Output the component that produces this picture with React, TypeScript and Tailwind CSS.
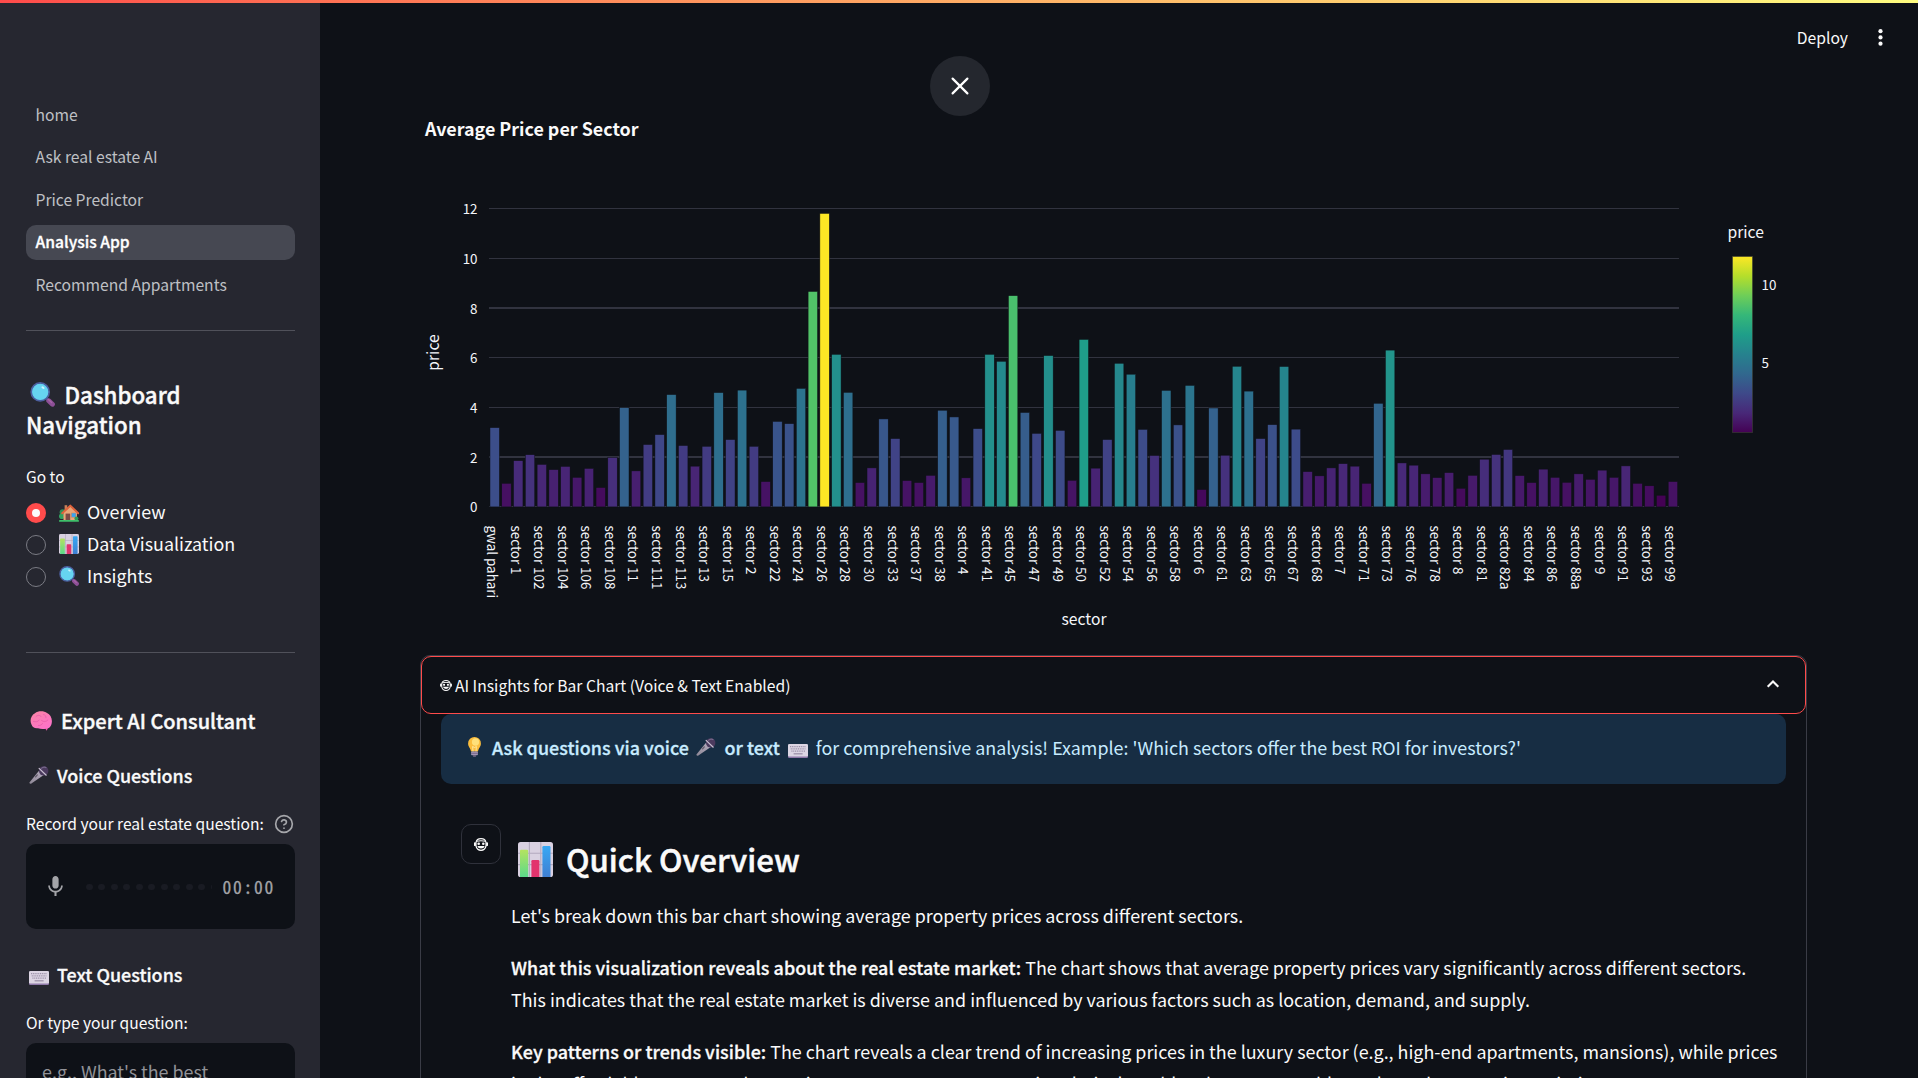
import type { ReactNode } from "react";

/* ---------- Emoji drawings ---------- */

function Magnifier({ className }: { className?: string }) {
  return (
    <svg viewBox="0 0 25 25" className={className}>
      <path d="M16.2 16 L18 17.8" stroke="#4b4a86" strokeWidth="2.6" />
      <path d="M18.8 18.8 L22.4 22.2" stroke="#8d4f96" strokeWidth="5" strokeLinecap="round" />
      <path d="M18.4 17.6 L21.6 20.6" stroke="#a666a8" strokeWidth="1.4" strokeLinecap="round" />
      <circle cx="10.2" cy="9.9" r="9" fill="#62d0ee" stroke="#4c5fa0" strokeWidth="1.7" />
      <circle cx="10.2" cy="9.9" r="7.6" fill="#66d4f1" />
      <ellipse cx="13" cy="5.6" rx="1.7" ry="1.1" fill="#c9f3fd" transform="rotate(30 13 5.6)" />
    </svg>
  );
}

function House({ className }: { className?: string }) {
  return (
    <svg viewBox="0 0 20 18" className={className}>
      <circle cx="3.6" cy="8.2" r="3" fill="#2f8f57" />
      <circle cx="2.8" cy="12.2" r="2.8" fill="#33a060" />
      <rect x="5.6" y="1.2" width="2.6" height="5" fill="#c98158" />
      <path d="M4.5 16.8V8.6L11.3 2.6L18 8.6V16.8Z" fill="#e9a679" />
      <path d="M3.2 9.3L11.3 1.6L19.2 9.3" fill="none" stroke="#e2633c" strokeWidth="2" strokeLinecap="round" strokeLinejoin="round" />
      <rect x="6.6" y="9.6" width="4.6" height="7.2" fill="#7c4a45" />
      <rect x="12.4" y="9" width="4.6" height="4.2" fill="#35a4f2" stroke="#c58a66" strokeWidth=".6" />
      <circle cx="17.4" cy="14.6" r="2" fill="#2f9a58" />
      <rect x="0" y="16" width="20" height="1.8" rx=".9" fill="#3fbf6a" />
    </svg>
  );
}

function BarEmoji({ className }: { className?: string }) {
  return (
    <svg viewBox="0 0 35 35" className={className}>
      <defs>
        <linearGradient id="eg" x1="0" y1="0" x2="0" y2="1">
          <stop offset="0" stopColor="#b4e35f" />
          <stop offset="1" stopColor="#5bd98a" />
        </linearGradient>
        <linearGradient id="eb" x1="0" y1="0" x2="0" y2="1">
          <stop offset="0" stopColor="#37a8f4" />
          <stop offset="1" stopColor="#3f7fd2" />
        </linearGradient>
      </defs>
      <rect width="35" height="35" rx="2.6" fill="#d9d1e1" />
      <path d="M11.4 0V35M22.8 0V35M0 11.3H35M0 22.6H35" stroke="#b3a9be" strokeWidth="1.1" />
      <path d="M2 35V9q0-1.2 1.2-1.2H9q1.2 0 1.2 1.2V35Z" fill="url(#eg)" />
      <path d="M13.4 35V19.2q0-1.2 1.2-1.2H20.2q1.2 0 1.2 1.2V35Z" fill="#e2336d" />
      <path d="M24.4 35V5.3q0-1.2 1.2-1.2H31.3q1.2 0 1.2 1.2V35Z" fill="url(#eb)" />
    </svg>
  );
}

function Brain({ className }: { className?: string }) {
  return (
    <svg viewBox="0 0 22 20" className={className}>
      <defs>
        <linearGradient id="br" x1="0" y1="0" x2="0.6" y2="1">
          <stop offset="0" stopColor="#fb86a4" />
          <stop offset="1" stopColor="#fc72c8" />
        </linearGradient>
      </defs>
      <path d="M14.5 16.5l2.3 3.2 1.4-3.6Z" fill="#e85ba6" />
      <path d="M5 2.2C8-.4 14-.4 17 2c3.200 1.400 5.400 5.200 4.800 9.400-.3 3.800-2.600 6-5.600 6.200-3 .9-6 .5-8.200-.3-3.400.4-5.600-1-6.400-3.500C-.6 9.600.8 4.400 5 2.200Z" fill="url(#br)" />
      <path d="M6 5.500c1.800-1.700 4-1.500 5.200.1M13.500 3.500c1.700.3 2.700 1.700 2.500 3.300M3.500 10.500c2.200.8 4.600.3 5.800-1.500M11.500 9.500c2 1.500 4.600 1.400 6.300-.4M8.500 14.500c1.700.2 3.300-.6 4-2" fill="none" stroke="#e558aa" strokeWidth=".7" strokeLinecap="round" />
    </svg>
  );
}

function MicEmoji({ className }: { className?: string }) {
  return (
    <svg viewBox="0 0 20 18" className={className}>
      <defs>
        <linearGradient id="mc" x1="0" y1="1" x2="1" y2="0">
          <stop offset="0" stopColor="#8e8796" />
          <stop offset="1" stopColor="#b6adbf" />
        </linearGradient>
      </defs>
      <path d="M.4 16.4L10.200 4.600L14.800 9L2 17.800Q.6 18.200.4 16.400Z" fill="url(#mc)" />
      <circle cx="14.700" cy="4.900" r="4.700" fill="#4b3a5e" />
      <path d="M12.200 2.600q2.500-2.400 5.200-.8" stroke="#76688a" strokeWidth="1.100" fill="none" />
      <path d="M10.100 2.400L17.200 9.200" stroke="#c9bfd2" strokeWidth="1.200" strokeLinecap="round" />
      <path d="M6.600 10.800l1.700-1.900" stroke="#5f5868" strokeWidth="1.200" strokeLinecap="round" />
    </svg>
  );
}

function Keyboard({ className }: { className?: string }) {
  return (
    <svg viewBox="0 0 20 14" className={className}>
      <rect y=".8" width="20" height="13.200" rx="1.300" fill="#8f78a8" />
      <rect width="20" height="12.600" rx="1.300" fill="#dcd5e3" />
      <path d="M2 2.600H18M2.700 4.900H17.500M3.400 7.200H17" stroke="#9c91a9" strokeWidth="1.300" strokeDasharray="1.100 .7" />
      <path d="M5.600 9.800H14.600" stroke="#9c91a9" strokeWidth="1.300" />
    </svg>
  );
}

function Bulb({ className }: { className?: string }) {
  return (
    <svg viewBox="0 0 13 20" className={className}>
      <path d="M6.500 0a6.400 6.400 0 0 1 6.400 6.400c0 3.400-2.400 4.500-2.900 8.100H3C2.500 10.900.1 9.800.1 6.400A6.400 6.400 0 0 1 6.500 0Z" fill="#fbbd3d" />
      <ellipse cx="7.500" cy="5" rx="3.600" ry="3.800" fill="#ffe07a" />
      <path d="M5 14.500L4.600 9.500 6.500 10.500 8.400 9.500 8 14.500" fill="none" stroke="#fff0b0" strokeWidth=".8" />
      <rect x="3.100" y="14.500" width="6.800" height="3.700" rx=".8" fill="#a294b3" />
      <path d="M3.200 16.300H9.800" stroke="#6b5c7e" strokeWidth=".8" />
      <rect x="4.900" y="18.200" width="3.200" height="1.500" rx=".7" fill="#7a6c8b" />
    </svg>
  );
}

function RobotFace({ className }: { className?: string }) {
  return (
    <svg viewBox="0 0 14 13" className={className}>
      <path d="M2 4.500Q2.600.6 7 .6T12 4.500V8Q11 12.300 7 12.300T2 8Z" fill="none" stroke="#fafafa" strokeWidth="1.200" />
      <rect x="0" y="4.200" width="1.900" height="3.900" rx=".9" fill="#fafafa" />
      <rect x="12.100" y="4.200" width="1.900" height="3.900" rx=".9" fill="#fafafa" />
      <path d="M2.500 3.300Q7 2.300 11.500 3.300" fill="none" stroke="#fafafa" strokeWidth="1.100" />
      <circle cx="4.700" cy="5.700" r="1.300" fill="#fafafa" />
      <circle cx="9.300" cy="5.700" r="1.300" fill="#fafafa" />
      <path d="M3.300 8H10.700Q10 10.500 7 10.500T3.300 8Z" fill="#fafafa" />
    </svg>
  );
}

/* ---------- Chart ---------- */

const prices = [
  3.19, 0.95, 1.86, 2.1, 1.71, 1.5, 1.63, 1.19, 1.55, 0.78, 1.99, 3.99, 1.45, 2.51, 2.91, 4.52, 2.47, 1.64, 2.44, 4.6,
  2.71, 4.7, 2.44, 1.02, 3.44, 3.35, 4.77, 8.67, 11.81, 6.14, 4.61, 0.98, 1.57, 3.54, 2.75, 1.06, 0.98, 1.27, 3.89,
  3.62, 1.17, 3.15, 6.14, 5.86, 8.5, 3.8, 2.96, 6.09, 3.08, 1.07, 6.74, 1.56, 2.71, 5.78, 5.34, 3.12, 2.07, 4.69, 3.3,
  4.89, 0.7, 3.98, 2.08, 5.66, 4.66, 2.75, 3.31, 5.65, 3.13, 1.42, 1.25, 1.57, 1.74, 1.64, 0.95, 4.17, 6.31, 1.77,
  1.68, 1.33, 1.18, 1.38, 0.75, 1.27, 1.92, 2.11, 2.31, 1.26, 0.98, 1.52, 1.19, 0.99, 1.33, 1.11, 1.48, 1.19, 1.65,
  0.95, 0.85, 0.47, 1.02,
];

const labels =
  "gwal pahari|1|102|104|106|108|11|111|113|13|15|2|22|24|26|28|30|33|37|38|4|41|45|47|49|50|52|54|56|58|6|61|63|65|67|68|7|71|73|76|78|8|81|82a|84|86|88a|9|91|93|99"
    .split("|")
    .map((l, i) => (i === 0 ? l : `sector ${l}`));

const viridis = [
  [68, 1, 84], [72, 40, 120], [62, 73, 137], [49, 104, 142], [38, 130, 142],
  [31, 158, 137], [53, 183, 121], [110, 206, 88], [181, 222, 43], [253, 231, 37],
];

function colorFor(v: number) {
  const t = Math.min(1, Math.max(0, (v - 0.47) / (11.81 - 0.47))) * 9;
  const i = Math.min(8, Math.floor(t));
  const f = t - i;
  const c = viridis[i].map((a, k) => Math.round(a + (viridis[i + 1][k] - a) * f));
  return `rgb(${c.join(",")})`;
}

const X0 = 489;
const STEP = 1190 / 101;
const Y0 = 506.9;
const UNIT = 24.85;

const gridLines: [number, number, number][] = [
  [12, 208, 1], [10, 258, 1], [8, 307, 2], [6, 357, 1], [4, 407, 1], [2, 456, 2], [0, 506, 1],
];

function BarChart() {
  return (
    <svg viewBox="420 142 1386 513" className="block h-[513px] w-[1386px]" fill="#f4f6fa">
      <defs>
        <linearGradient id="scale" x1="0" y1="1" x2="0" y2="0">
          {viridis.map((c, i) => (
            <stop key={i} offset={i / 9} stopColor={`rgb(${c.join(",")})`} />
          ))}
        </linearGradient>
      </defs>
      {gridLines.map(([v, y, h]) => (
        <g key={v}>
          <rect x={X0} y={y} width={1190} height={h} fill="#31333f" />
          <text x="477.500" y={Y0 + 5.4 - v * UNIT} textAnchor="end" className="text-[13.400px]">
            {v}
          </text>
        </g>
      ))}
      {prices.map((p, i) => (
        <rect
          key={i}
          x={X0 + STEP * (i + 0.1) - 0.2}
          y={Y0 - p * UNIT}
          width={STEP * 0.8}
          height={p * UNIT}
          fill={colorFor(p)}
          stroke="#0e1117"
          strokeWidth="0.5"
        />
      ))}
      {labels.map((l, i) => (
        <text
          key={l}
          transform={`translate(${X0 + STEP * (2 * i + 0.5) - 7.9} 525.600) rotate(90)`}
          className="text-[13.400px]"
        >
          {l}
        </text>
      ))}
      <text transform="translate(438.600 352.500) rotate(-90)" textAnchor="middle" className="text-[15.670px]">
        price
      </text>
      <text x="1084" y="625.400" textAnchor="middle" className="text-[15.670px]">
        sector
      </text>
      <text x="1727.500" y="237.800" className="text-[15.670px]">
        price
      </text>
      <rect x="1732.500" y="256.500" width="20" height="176" fill="url(#scale)" stroke="#3c4034" strokeOpacity=".6" />
      <text x="1761.500" y="290.300" className="text-[13.400px]">
        10
      </text>
      <text x="1761.500" y="368.400" className="text-[13.400px]">
        5
      </text>
    </svg>
  );
}

/* ---------- Sidebar ---------- */

const pages = ["home", "Ask real estate AI", "Price Predictor", "Analysis App", "Recommend Appartments"];

function Radio({ checked, icon, children }: { checked?: boolean; icon: ReactNode; children: ReactNode }) {
  return (
    <label className="flex h-8 items-center">
      {checked ? (
        <span className="flex size-5 items-center justify-center rounded-full bg-[#ff4b4b]">
          <span className="size-[7.500px] rounded-full bg-[#fafafa]" />
        </span>
      ) : (
        <span className="size-5 rounded-full border border-[#7b7c84] bg-[#262730]" />
      )}
      <span className="ml-[13px] flex w-5 justify-center">{icon}</span>
      <span className="ml-[8px] pb-[5px] text-[17.900px] leading-[26px]">{children}</span>
    </label>
  );
}

function Sidebar() {
  return (
    <aside className="flex h-full w-[320px] shrink-0 flex-col overflow-hidden bg-[#262730] pt-[97.500px] pr-[25px] pl-[26px]">
      <nav className="flex flex-col gap-[7.500px]">
        {pages.map((p) =>
          p === "Analysis App" ? (
            <a key={p} className="h-[35px] rounded-[10px] bg-[#464852] pl-[9.500px] text-[15.670px] leading-[34px] font-medium text-white [-webkit-text-stroke:0.3px]">
              {p}
            </a>
          ) : (
            <a key={p} className="h-[35px] pl-[9.500px] text-[15.670px] leading-[34px] text-[#bfc0c4]">
              {p}
            </a>
          ),
        )}
      </nav>
      <hr className="mt-[27.500px] h-px shrink-0 border-0 bg-[#50515a]" />
      <h2 className="mt-[48px] text-[22.300px] leading-[30px] font-medium [-webkit-text-stroke:0.400px]">
        <span className="flex items-center">
          <Magnifier className="ml-1 size-[25px]" />
          <span className="ml-[9.500px]">Dashboard</span>
        </span>
        Navigation
      </h2>
      <p className="mt-[24px] text-[15.500px] leading-[26px]">Go to</p>
      <div className="mt-[8px]">
        <Radio checked icon={<House className="h-[18px] w-5" />}>Overview</Radio>
        <Radio icon={<BarEmoji className="mb-0.5 size-5" />}>Data Visualization</Radio>
        <Radio icon={<Magnifier className="mb-0.5 size-5" />}>Insights</Radio>
      </div>
      <hr className="mt-[59px] h-px shrink-0 border-0 bg-[#50515a]" />
      <h3 className="mt-[53px] flex items-center text-[20px] leading-[30px] font-medium whitespace-nowrap [-webkit-text-stroke:0.400px]">
        <Brain className="ml-1 h-5 w-[22px]" />
        <span className="ml-[9px]">Expert AI Consultant</span>
      </h3>
      <h4 className="mt-[26px] flex items-center text-[17.900px] leading-[26px] font-medium [-webkit-text-stroke:0.300px]">
        <MicEmoji className="ml-[3px] h-[18px] w-5" />
        <span className="ml-[8px]">Voice Questions</span>
      </h4>
      <div className="mt-[22px] flex items-center text-[15.620px] leading-[26px] whitespace-nowrap">
        Record your real estate question:
        <svg viewBox="0 0 24 24" className="mt-0.5 ml-[10px] size-5 shrink-0" fill="none" stroke="#a6a7ab" strokeWidth="2" strokeLinecap="round" strokeLinejoin="round">
          <circle cx="12" cy="12" r="10" />
          <path d="M9.090 9a3 3 0 0 1 5.830 1c0 2-3 3-3 3M12 17h.01" />
        </svg>
      </div>
      <div className="mt-2 flex h-[85px] shrink-0 items-center rounded-[10px] bg-[#0e1117] pl-[17px]">
        <svg viewBox="0 0 24 24" className="size-[25px] shrink-0" fill="#a3a4a8">
          <path d="M12 14c1.660 0 3-1.340 3-3V5c0-1.660-1.340-3-3-3S9 3.340 9 5v6c0 1.660 1.340 3 3 3zm5.300-3c0 3-2.540 5.100-5.300 5.100S6.700 14 6.700 11H5c0 3.410 2.720 6.230 6 6.720V21h2v-3.280c3.280-.48 6-3.300 6-6.720h-1.700z" />
        </svg>
        <div className="ml-[17.500px] flex w-[126.500px] gap-[5.500px] overflow-hidden">
          {Array.from({ length: 11 }, (_, i) => (
            <span key={i} className="h-[6px] w-[7px] shrink-0 rounded-[3px] bg-[#191b23]" />
          ))}
        </div>
        <span className="ml-[10.500px] font-['Noto_Sans_Mono_CJK_SC'] text-[17.500px] leading-[26px] tracking-[1.750px] text-[#a3a4a8] [-webkit-text-stroke:0.300px]">00:00</span>
      </div>
      <h4 className="mt-8 flex items-center text-[17.900px] leading-[26px] font-medium [-webkit-text-stroke:0.300px]">
        <Keyboard className="mt-[7px] ml-[3px] h-[14px] w-5" />
        <span className="ml-[8px]">Text Questions</span>
      </h4>
      <p className="mt-[22px] text-[15.620px] leading-[26px]">Or type your question:</p>
      <div className="mt-2 h-[120px] shrink-0 rounded-[10px] bg-[#0e1117] px-4 pt-[15px] text-[17.900px] leading-[26px] text-[#919297]">
        e.g., What's the best
      </div>
    </aside>
  );
}

/* ---------- Main ---------- */

export default function App() {
  return (
    <div className="relative flex h-[1078px] w-[1918px] overflow-hidden bg-[#0e1117] font-['Noto_Sans_CJK_SC','Noto_Sans',sans-serif] text-[#fafafa]">
      <Sidebar />
      <main className="flex min-w-0 flex-1 flex-col">
        <header className="flex h-[75px] shrink-0 items-center justify-end pr-[30px]">
          <span className="pt-px text-[15.670px] leading-[26px]">Deploy</span>
          <svg viewBox="0 0 15 25" className="ml-[25px] h-[25px] w-[15px]" fill="#fafafa">
            <circle cx="7.500" cy="6.200" r="2.100" />
            <circle cx="7.500" cy="12.400" r="2.100" />
            <circle cx="7.500" cy="18.700" r="2.100" />
          </svg>
        </header>
        <section className="ml-[100px] shrink-0 pt-10">
          <h5 className="pl-[5px] text-[17.900px] leading-[27px] font-bold">Average Price per Sector</h5>
          <BarChart />
        </section>
        <section className="ml-[100px] h-[600px] w-[1387px] shrink-0 rounded-[10px] border border-[#3a3c46]">
          <div className="flex h-[58px] items-center rounded-[10px] border border-[#ff4b4b] pr-[24px] pl-[18px] text-[15.670px] leading-[26px]">
            <RobotFace className="h-[11px] w-[12px]" />
            <span className="ml-[3px] pt-px">AI Insights for Bar Chart (Voice &amp; Text Enabled)</span>
            <svg viewBox="0 0 16 10" className="mr-[0.500px] mb-0.5 ml-auto h-[10px] w-4" fill="none" stroke="#fafafa" strokeWidth="2.100">
              <path d="M2.700 7.800L8 2.500L13.300 7.800" />
            </svg>
          </div>
          <div className="mx-5 flex h-[70px] items-center rounded-[10px] bg-[#172d43] pb-[4px] pl-[27px] text-[17.900px] leading-[26px] whitespace-nowrap text-[#c7ebff]">
            <Bulb className="h-5 w-[13px]" />
            <strong className="ml-[11px] font-medium tracking-[0.040px] [-webkit-text-stroke:0.300px]">Ask questions via voice</strong>
            <MicEmoji className="ml-[7.500px] h-[18px] w-5" />
            <strong className="ml-[8px] font-medium tracking-[0.040px] [-webkit-text-stroke:0.300px]">or text</strong>
            <Keyboard className="mt-[7px] ml-[8px] h-[14px] w-5" />
            <span className="ml-[8px]">for comprehensive analysis! Example: 'Which sectors offer the best ROI for investors?'</span>
          </div>
          <div className="mt-10 flex gap-[10px] px-10">
            <div className="flex size-10 shrink-0 items-center justify-center rounded-[10px] border border-[#2f313b]">
              <RobotFace className="h-[13px] w-[14px]" />
            </div>
            <div className="pt-[15px] text-[17.900px] leading-8 whitespace-nowrap">
              <h3 className="flex items-center text-[31.200px] leading-[40px] font-medium [-webkit-text-stroke:0.500px]">
                <BarEmoji className="ml-[6.500px] size-[35px]" />
                <span className="ml-[13.500px]">Quick Overview</span>
              </h3>
              <p className="mt-[20px]">Let's break down this bar chart showing average property prices across different sectors.</p>
              <p className="mt-5">
                <strong className="font-medium tracking-[0.040px] [-webkit-text-stroke:0.300px]">What this visualization reveals about the real estate market:</strong> The chart shows that average property prices vary significantly across different sectors.
                <br />
                This indicates that the real estate market is diverse and influenced by various factors such as location, demand, and supply.
              </p>
              <p className="mt-5">
                <strong className="font-medium tracking-[0.050px] [-webkit-text-stroke:0.300px]">Key patterns or trends visible:</strong> The chart reveals a clear trend of increasing prices in the luxury sector (e.g., high-end apartments, mansions), while prices
                <br />
                in the affordable sectors and emerging zones across town remain relatively stable. There are notable peaks and some price variation
              </p>
            </div>
          </div>
        </section>
      </main>
      <div className="absolute inset-x-0 top-0 h-[3px] bg-linear-to-r from-[#ff4b4b] to-[#fffd80]" />
      <button className="absolute top-[56px] left-[930px] flex size-[60px] items-center justify-center rounded-full bg-[#24272e]">
        <svg viewBox="0 0 20 20" className="size-5" stroke="#ffffff" strokeWidth="2.200" strokeLinecap="round">
          <path d="M2.600 2.600L17.400 17.400M17.400 2.600L2.600 17.400" />
        </svg>
      </button>
    </div>
  );
}
